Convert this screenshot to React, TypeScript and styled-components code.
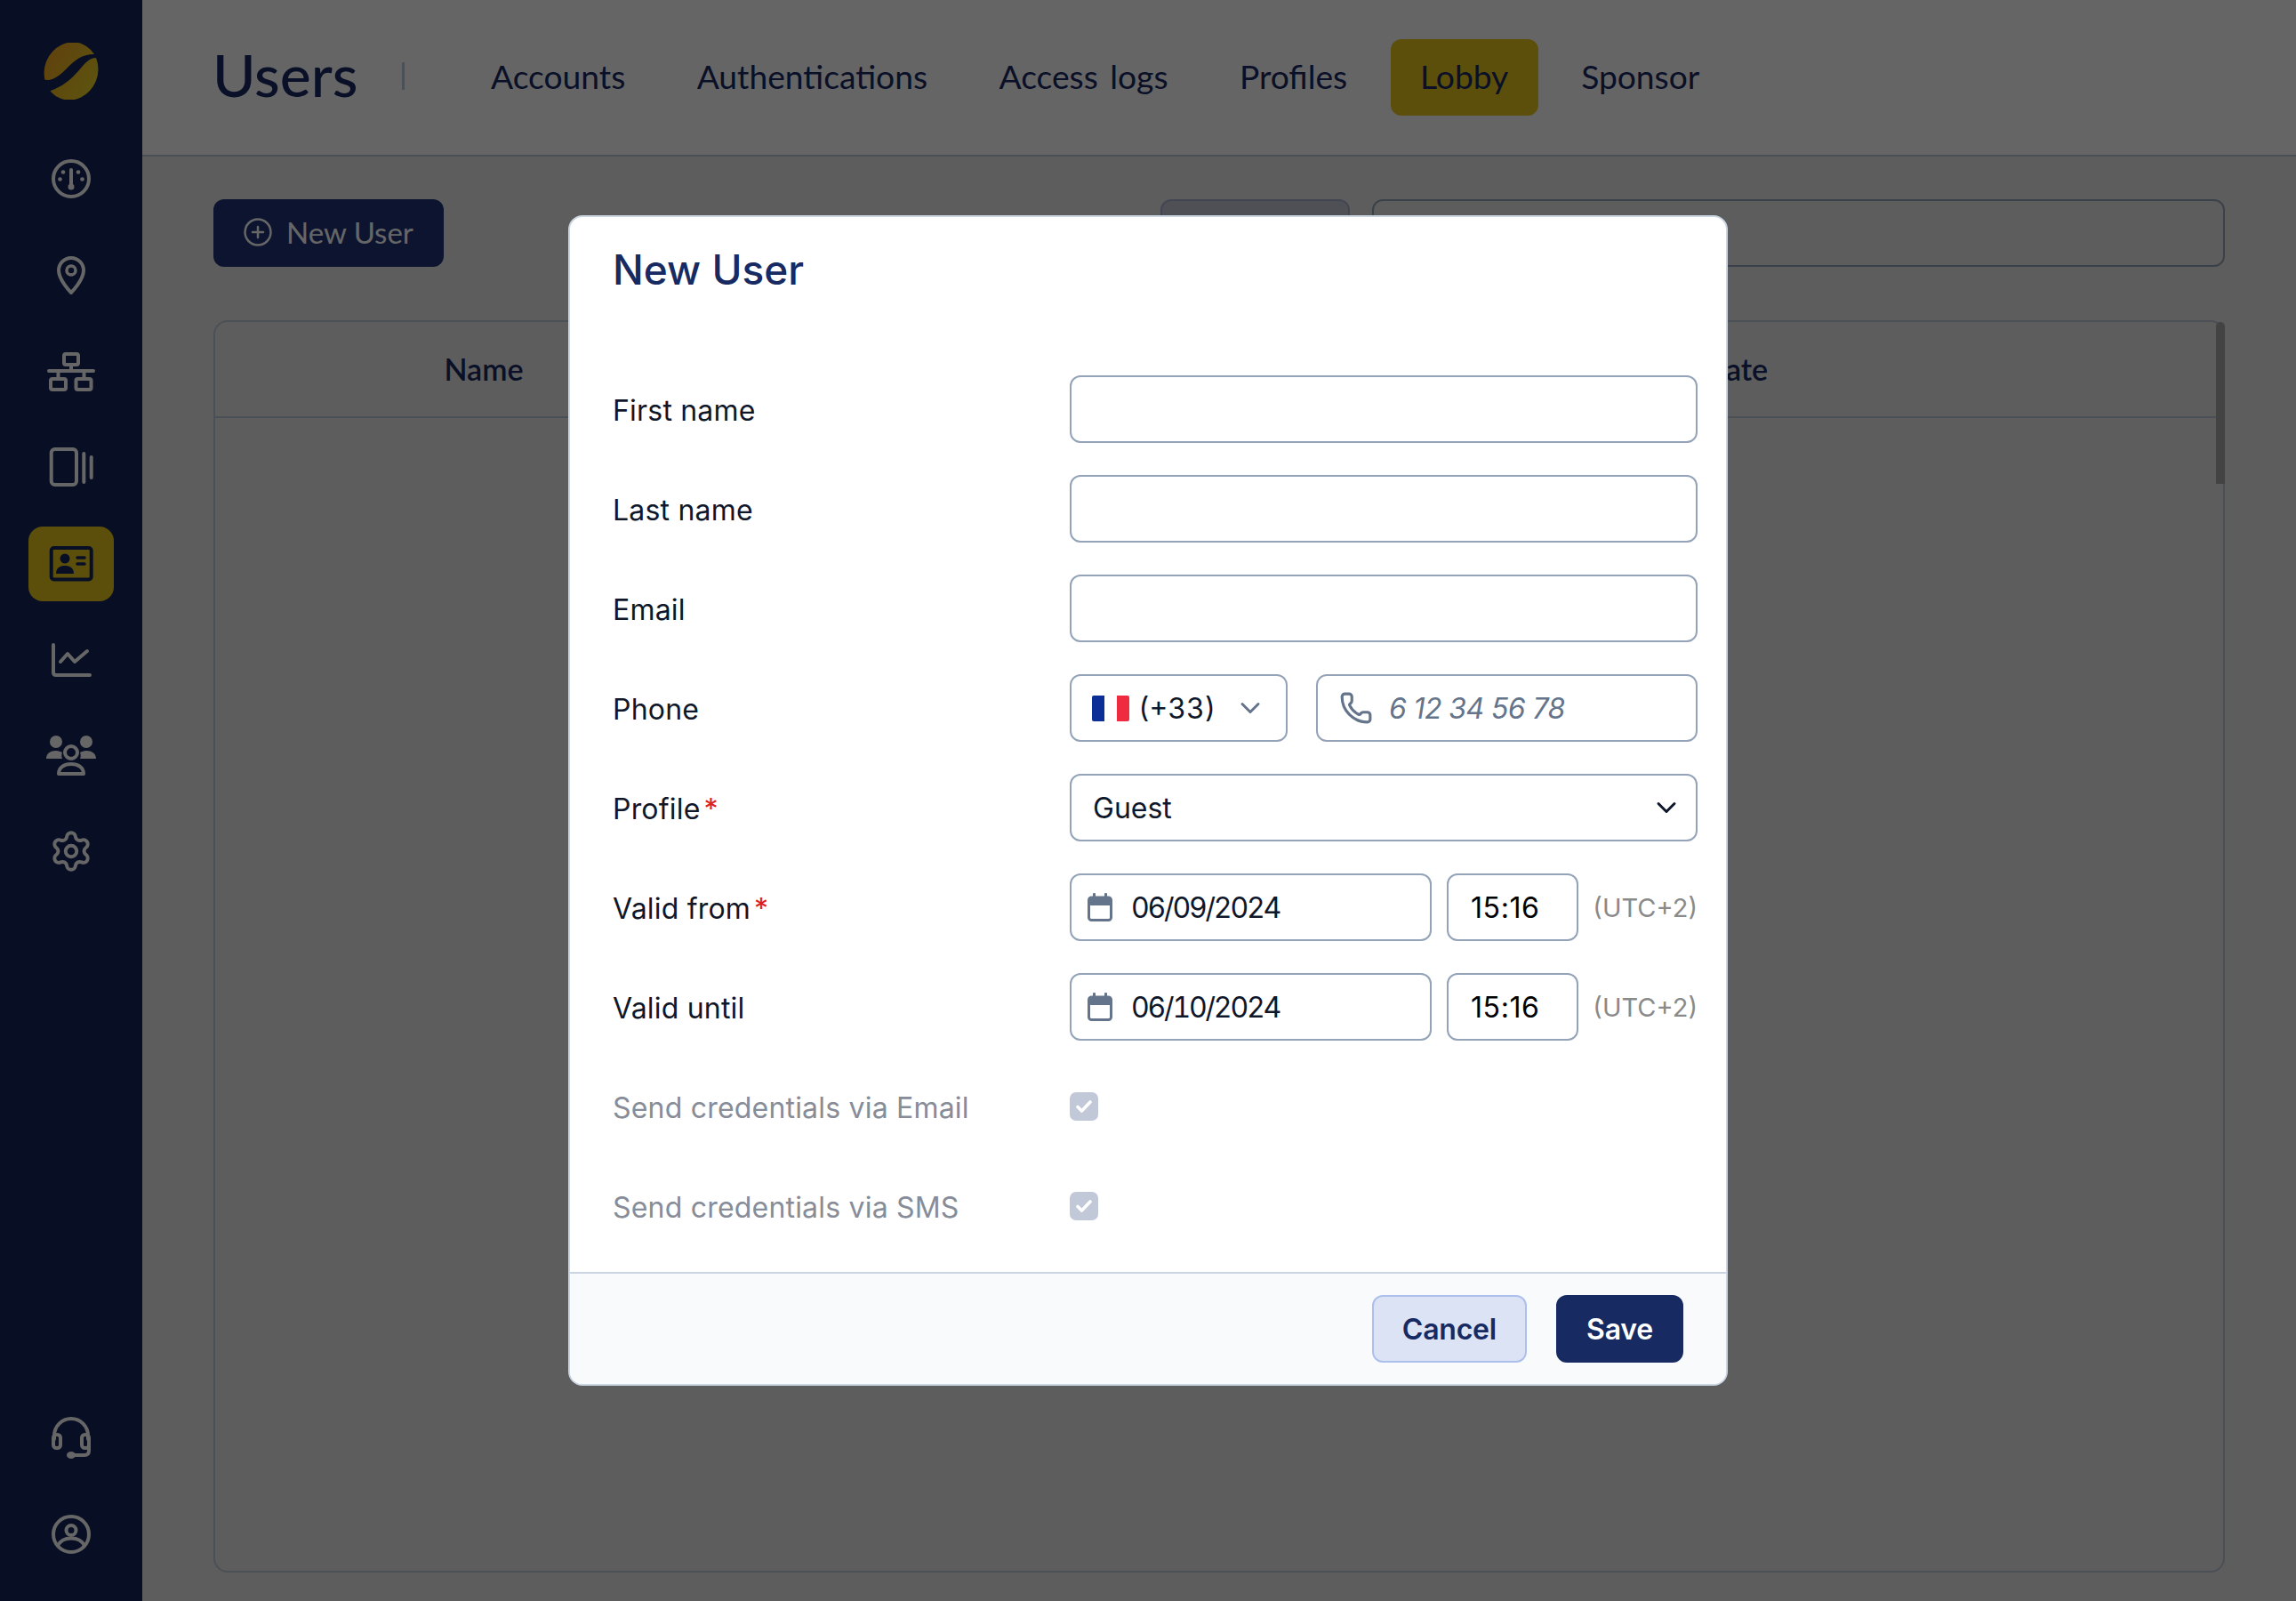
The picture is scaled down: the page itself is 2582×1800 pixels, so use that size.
import { FC, ReactNode } from "react";
import styled, { createGlobalStyle } from "styled-components";
import { ChevronDown, Phone, Settings } from "lucide-react";

const GlobalStyle = createGlobalStyle`
  html, body { margin: 0; padding: 0; height: 100%; }
  body { font-family: "Inter", "Liberation Sans", sans-serif; background: #e8e8e8; }
  * { box-sizing: border-box; }
`;

const Page = styled.div`
  position: relative;
  display: flex;
  width: 2582px;
  height: 1800px;
  overflow: hidden;
`;

const Sidebar = styled.nav`
  width: 160px;
  flex: none;
  display: flex;
  flex-direction: column;
  align-items: center;
  background: #14275a;
  padding: 48px 0 32px;
`;

const Logo = styled.svg`
  width: 64px;
  height: 64px;
  margin-bottom: 48px;
`;

const SideList = styled.div`
  display: flex;
  flex-direction: column;
  gap: 24px;
`;

const SideBottom = styled(SideList)`
  margin-top: auto;
`;

const SideItem = styled.div<{ $active?: boolean }>`
  width: 96px;
  height: 84px;
  display: flex;
  align-items: center;
  justify-content: center;
  padding-bottom: ${(p) => (p.$active ? 0 : 2)}px;
  border-radius: 16px;
  color: ${(p) => (p.$active ? "#14275a" : "#ffffff")};
  background: ${(p) => (p.$active ? "#e6c61f" : "transparent")};
`;

const Main = styled.div`
  flex: 1;
  min-width: 0;
  display: flex;
  flex-direction: column;
`;

const TopBar = styled.header`
  height: 176px;
  flex: none;
  display: flex;
  align-items: center;
  padding: 0 0 0 80px;
  background: #fcfcfc;
  border-bottom: 2px solid #bcc5d6;
`;

const Title = styled.h1`
  margin: 0 0 6px -1px;
  font-family: "Lato", sans-serif;
  font-weight: 500;
  font-size: 66px;
  line-height: 80px;
  color: #172a62;
  width: 213px;
`;

const Separator = styled.span`
  width: 3px;
  height: 31px;
  margin-bottom: 4px;
  background: #bcc5d6;
`;

const Tabs = styled.div`
  display: flex;
  gap: 16.4px;
  margin-left: 65px;
`;

const Tab = styled.div<{ $active?: boolean }>`
  height: 86px;
  padding: 0 ${(p) => (p.$active ? 33.5 : 32)}px 3px;
  display: flex;
  align-items: center;
  border-radius: 12px;
  font-family: "Lato", sans-serif;
  font-size: 37.2px;
  word-spacing: 4px;
  color: #172a62;
  background: ${(p) => (p.$active ? "#e6c61f" : "transparent")};
`;

const Content = styled.main`
  flex: 1;
  display: flex;
  flex-direction: column;
  gap: 60px;
  padding: 48px 80px 32px;
  min-height: 0;
`;

const Toolbar = styled.div`
  display: flex;
  height: 76px;
`;

const NewButton = styled.div`
  width: 259px;
  display: flex;
  align-items: center;
  gap: 16px;
  padding: 0 0 2px 34px;
  border-radius: 12px;
  background: #1e3378;
  color: #ffffff;
  font-family: "Lato", sans-serif;
  font-size: 33px;
`;

const FilterButton = styled.div`
  width: 213px;
  margin-left: auto;
  border-radius: 12px;
  background: #c5c9d8;
  border: 2px solid #a9b0cc;
`;

const SearchBox = styled.div`
  width: 959px;
  margin-left: 25px;
  border-radius: 12px;
  border: 2px solid #94a3b8;
`;

const Table = styled.section`
  position: relative;
  flex: 1;
  border: 2px solid #bcc5d6;
  border-radius: 16px;
`;

const TableHead = styled.div`
  height: 108px;
  padding-bottom: 2px;
  display: grid;
  grid-template-columns: 604px 772px 608px;
  align-items: center;
  justify-items: center;
  border-bottom: 2px solid #bcc5d6;
  font-family: "Lato", sans-serif;
  font-weight: 600;
  font-size: 34px;
  color: #172a62;
`;

const ScrollThumb = styled.span`
  position: absolute;
  top: 0;
  right: -2px;
  width: 10px;
  height: 182px;
  border-radius: 8px 8px 0 0;
  background: #a7a7a7;
`;

const Overlay = styled.div`
  position: absolute;
  inset: 0;
  display: flex;
  align-items: center;
  justify-content: center;
  background: rgba(0, 0, 0, 0.6);
`;

const Modal = styled.div`
  width: 1304px;
  height: 1316px;
  display: flex;
  flex-direction: column;
  background: #ffffff;
  border: 2px solid #cbd5e1;
  border-radius: 16px;
  overflow: hidden;
`;

const ModalTitle = styled.h2`
  margin: 30px 0 90px 48px;
  font-weight: 500;
  font-size: 46px;
  line-height: 58px;
  color: #172a62;
`;

const Form = styled.div`
  flex: 1;
  display: flex;
  flex-direction: column;
  gap: 36px;
  padding: 0 32px 36px 48px;
`;

const Row = styled.div`
  height: 76px;
  display: grid;
  grid-template-columns: 514px 706px;
  align-items: center;
`;

const Label = styled.label<{ $muted?: boolean }>`
  padding-top: 3px;
  font-size: 32px;
  letter-spacing: 0.2px;
  color: ${(p) => (p.$muted ? "#868c98" : "#0f172a")};
`;

const Required = styled.span`
  margin-left: 4px;
  color: #dc2020;
`;

const Controls = styled.div`
  height: 76px;
  min-width: 0;
  display: flex;
  align-items: center;
`;

const Field = styled.div<{ $width?: number }>`
  height: 76px;
  min-width: 0;
  flex: ${(p) => (p.$width ? `0 0 ${p.$width}px` : "1")};
  display: flex;
  align-items: center;
  border: 2px solid #94a3b8;
  border-radius: 12px;
  background: #ffffff;
  font-size: 32px;
  color: #0f172a;
`;

const TextInput = styled.input`
  width: 100%;
  height: 100%;
  padding: 0 24px;
  border: 0;
  outline: 0;
  background: transparent;
  font: inherit;
  color: inherit;
`;

const CountryField = styled(Field)`
  padding-left: 23px;
  font-variant-numeric: tabular-nums;
`;

const Flag = styled.span`
  width: 42px;
  height: 29px;
  margin-right: 10px;
  display: flex;
  overflow: hidden;
  border-radius: 2px;
`;

const FlagBand = styled.span<{ $color: string }>`
  flex: 1;
  background: ${(p) => p.$color};
`;

const PhoneField = styled(Field)`
  margin-left: 32px;
  padding-left: 24px;
  color: #64748b;
`;

const PhoneInput = styled.input`
  flex: 1;
  width: 100%;
  min-width: 0;
  margin-left: 16px;
  border: 0;
  outline: 0;
  background: transparent;
  letter-spacing: -0.6px;
  font: italic 400 32px "Inter", sans-serif;

  &::placeholder {
    color: #64748b;
    opacity: 1;
  }
`;

const CaretSlot = styled.span<{ $color: string; $right: number }>`
  margin-left: auto;
  margin-right: ${(p) => p.$right}px;
  display: flex;
  color: ${(p) => p.$color};
`;

const SelectValue = styled.span`
  padding-left: 24px;
`;

const DateField = styled(Field)`
  padding-left: 18px;
  gap: 21px;
  letter-spacing: -2.2px;
  font-variant-numeric: tabular-nums;
`;

const TimeField = styled(Field)`
  margin-left: 17px;
  padding-left: 25px;
  letter-spacing: 0.6px;
  color: #000000;
`;

const Zone = styled.span`
  margin-left: auto;
  font-size: 29px;
  color: #8a8a8a;
`;

const CheckBox = styled.span`
  width: 32px;
  height: 32px;
  display: flex;
  align-items: center;
  justify-content: center;
  border-radius: 7px;
  background: #c1c8d8;
`;

const Footer = styled.footer`
  height: 126px;
  flex: none;
  display: flex;
  align-items: flex-start;
  justify-content: flex-end;
  gap: 33px;
  padding: 24px 48px 0 0;
  background: #f8fafc;
  border-top: 2px solid #cbd5e1;
`;

const Button = styled.button<{ $primary?: boolean }>`
  height: 76px;
  padding: 0 32px;
  border-radius: 12px;
  border: 2px solid ${(p) => (p.$primary ? "#172a62" : "#adc0ec")};
  background: ${(p) => (p.$primary ? "#172a62" : "#dce3f5")};
  color: ${(p) => (p.$primary ? "#ffffff" : "#172a62")};
  letter-spacing: -0.2px;
  font: 600 32px "Inter", sans-serif;
`;

const LogoMark: FC = () => (
  <Logo viewBox="0 0 64 64">
    <defs>
      <linearGradient id="bean" x1="0" y1="0.4" x2="1" y2="0.6">
        <stop offset="0" stopColor="#f0a722" />
        <stop offset="1" stopColor="#e8cf27" />
      </linearGradient>
    </defs>
    <ellipse cx="32" cy="32" rx="30" ry="33" fill="url(#bean)" transform="rotate(22 32 32)" />
    <path
      d="M-2 40C8 46 18 38 27 29C36 19 46 12 60 13L62 17C52 16 47 24 40 32C32 41 22 50 6 55Z"
      fill="#14275a"
    />
  </Logo>
);

const IconFrame: FC<{ w?: number; children: ReactNode }> = ({ w = 60, children }) => (
  <svg
    width={w}
    height="48"
    viewBox={`0 0 ${w} 48`}
    fill="none"
    stroke="currentColor"
    strokeWidth="4"
    strokeLinecap="round"
    strokeLinejoin="round"
  >
    {children}
  </svg>
);

const sideIcons: ReactNode[] = [
  <IconFrame key="dash">
    <circle cx="30" cy="24" r="20" />
    <path d="M30 14V31" />
    <circle cx="30" cy="33" r="3.5" fill="currentColor" stroke="none" />
    <g fill="currentColor" stroke="none">
      <circle cx="21" cy="16.5" r="2.3" />
      <circle cx="38" cy="16.5" r="2.3" />
      <circle cx="17.5" cy="24.5" r="2.3" />
      <circle cx="42.5" cy="24.5" r="2.3" />
    </g>
  </IconFrame>,
  <IconFrame key="pin">
    <path d="M30 44C30 44 16 30 16 19A14 14 0 0 1 44 19C44 30 30 44 30 44Z" />
    <circle cx="30" cy="19" r="5" strokeWidth="3.5" />
  </IconFrame>,
  <IconFrame key="net">
    <rect x="22" y="5" width="16" height="12" rx="2" />
    <path d="M30 17V24M5 24H55M15.5 24V31M44.5 24V31" />
    <rect x="7" y="33" width="17" height="12" rx="2" />
    <rect x="35.5" y="33" width="17" height="12" rx="2" />
  </IconFrame>,
  <IconFrame key="cards">
    <rect x="7.7" y="4" width="28.3" height="40" rx="4" />
    <path d="M44.3 9V41M52.7 13V36" />
  </IconFrame>,
  <IconFrame key="id">
    <rect x="7.7" y="6" width="45" height="35.5" rx="3" />
    <circle cx="23" cy="18" r="5.5" fill="currentColor" stroke="none" />
    <path d="M13 35C13 28 18 26 23 26C28 26 33 28 33 35Z" fill="currentColor" stroke="none" />
    <path d="M37 17H45M37 24H45" strokeWidth="3.5" />
  </IconFrame>,
  <IconFrame key="chart">
    <path d="M10 8V39Q10 42 13 42H51" />
    <path d="M18 27L26 18L34 27L48 15" />
  </IconFrame>,
  <IconFrame key="people">
    <g fill="currentColor" stroke="none">
      <circle cx="13" cy="9" r="7" />
      <circle cx="47" cy="9" r="7" />
      <path d="M2 28C2 22 7 19 13 19C16 19 18 20 20 21C19 23 19 26 20 28Z" />
      <path d="M58 28C58 22 53 19 47 19C44 19 42 20 40 21C41 23 41 26 40 28Z" />
    </g>
    <circle cx="30" cy="21" r="7" />
    <path d="M16 45C16 38 22 34 30 34C38 34 44 38 44 45Z" />
  </IconFrame>,
];

const ChecksIcon: FC = () => (
  <svg width="18" height="14" viewBox="0 0 18 14" fill="none">
    <path d="M2 7.5L6.5 12L16 2" stroke="#ffffff" strokeWidth="3.6" strokeLinecap="round" strokeLinejoin="round" />
  </svg>
);

const CalendarIcon: FC = () => (
  <svg width="28" height="32" viewBox="0 0 28 32" style={{ flex: "none" }}>
    <rect x="1.5" y="5" width="25" height="25.5" rx="3" fill="#ffffff" stroke="#64748b" strokeWidth="3" />
    <rect x="1.5" y="5" width="25" height="9" rx="2" fill="#64748b" />
    <rect x="6" y="0" width="3" height="7" rx="1" fill="#64748b" />
    <rect x="19" y="0" width="3" height="7" rx="1" fill="#64748b" />
  </svg>
);

const DateRow: FC<{ label: string; date: string; required?: boolean }> = ({ label, date, required }) => (
  <Row>
    <Label>
      {label}
      {required && <Required>*</Required>}
    </Label>
    <Controls>
      <DateField $width={407}>
        <CalendarIcon />
        {date}
      </DateField>
      <TimeField $width={148}>15:16</TimeField>
      <Zone>(UTC+2)</Zone>
    </Controls>
  </Row>
);

const CheckRow: FC<{ label: string }> = ({ label }) => (
  <Row>
    <Label $muted>{label}</Label>
    <CheckBox>
      <ChecksIcon />
    </CheckBox>
  </Row>
);

const TextRow: FC<{ label: string }> = ({ label }) => (
  <Row>
    <Label>{label}</Label>
    <Field>
      <TextInput />
    </Field>
  </Row>
);

const App = () => {
  return (
    <Page>
      <GlobalStyle />
      <Sidebar>
        <LogoMark />
        <SideList>
          {sideIcons.map((icon, i) => (
            <SideItem key={i} $active={i === 4}>
              {icon}
            </SideItem>
          ))}
          <SideItem>
            <Settings size={50} strokeWidth={1.9} />
          </SideItem>
        </SideList>
        <SideBottom>
          <SideItem>
            <IconFrame w={48}>
              <path d="M5 25V21A19 19 0 0 1 43 21V25" />
              <rect x="4" y="20" width="8" height="15" rx="3.5" />
              <rect x="36" y="20" width="8" height="15" rx="3.5" />
              <path d="M44 33V38Q44 43 39 43H26" />
              <ellipse cx="24" cy="43" rx="5" ry="4" fill="currentColor" stroke="none" />
            </IconFrame>
          </SideItem>
          <SideItem>
            <IconFrame w={48}>
              <circle cx="24" cy="24" r="20" />
              <circle cx="24" cy="19.5" r="5.5" />
              <path d="M9 37C12 30.5 18 28.5 24 28.5C30 28.5 36 30.5 39 37" />
            </IconFrame>
          </SideItem>
        </SideBottom>
      </Sidebar>
      <Main>
        <TopBar>
          <Title>Users</Title>
          <Separator />
          <Tabs>
            <Tab>Accounts</Tab>
            <Tab>Authentications</Tab>
            <Tab>Access logs</Tab>
            <Tab>Profiles</Tab>
            <Tab $active>Lobby</Tab>
            <Tab>Sponsor</Tab>
          </Tabs>
        </TopBar>
        <Content>
          <Toolbar>
            <NewButton>
              <svg width="32" height="32" viewBox="0 0 32 32" fill="none" stroke="currentColor" strokeWidth="2.5" strokeLinecap="round">
                <circle cx="16" cy="16" r="14.5" />
                <path d="M16 10V22M10 16H22" />
              </svg>
              New User
            </NewButton>
            <FilterButton />
            <SearchBox />
          </Toolbar>
          <Table>
            <TableHead>
              <span>Name</span>
              <span>Email</span>
              <span>End date</span>
            </TableHead>
            <ScrollThumb />
          </Table>
        </Content>
      </Main>
      <Overlay>
        <Modal>
          <ModalTitle>New User</ModalTitle>
          <Form>
            <TextRow label="First name" />
            <TextRow label="Last name" />
            <TextRow label="Email" />
            <Row>
              <Label>Phone</Label>
              <Controls>
                <CountryField $width={245}>
                  <Flag>
                    <FlagBand $color="#0b2f96" />
                    <FlagBand $color="#ffffff" />
                    <FlagBand $color="#ef2b3f" />
                  </Flag>
                  (+33)
                  <CaretSlot $color="#64748b" $right={22}>
                    <ChevronDown size={36} strokeWidth={2} />
                  </CaretSlot>
                </CountryField>
                <PhoneField>
                  <Phone size={38} strokeWidth={2} />
                  <PhoneInput placeholder="6 12 34 56 78" />
                </PhoneField>
              </Controls>
            </Row>
            <Row>
              <Label>
                Profile<Required>*</Required>
              </Label>
              <Field>
                <SelectValue>Guest</SelectValue>
                <CaretSlot $color="#0f172a" $right={15}>
                  <ChevronDown size={36} strokeWidth={2} />
                </CaretSlot>
              </Field>
            </Row>
            <DateRow label="Valid from" date="06/09/2024" required />
            <DateRow label="Valid until" date="06/10/2024" />
            <CheckRow label="Send credentials via Email" />
            <CheckRow label="Send credentials via SMS" />
          </Form>
          <Footer>
            <Button>Cancel</Button>
            <Button $primary>Save</Button>
          </Footer>
        </Modal>
      </Overlay>
    </Page>
  );
};

export default App;
